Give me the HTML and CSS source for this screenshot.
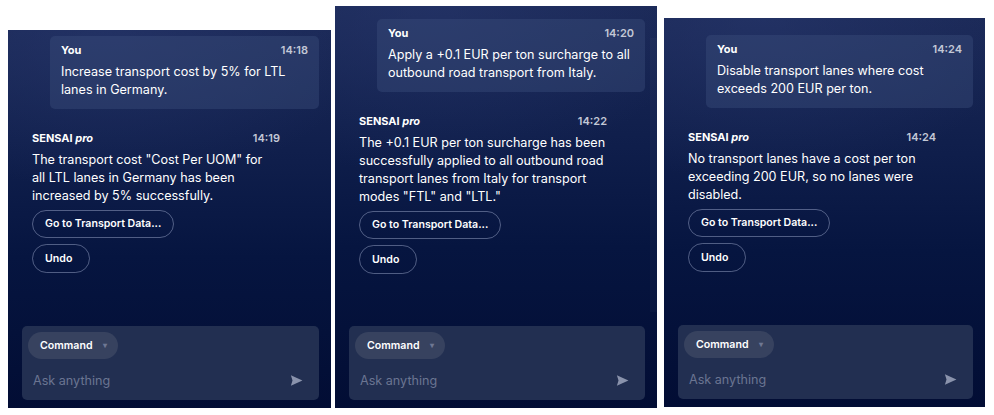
FILE: index.html
```html
<!DOCTYPE html>
<html lang="en">
<head>
<meta charset="utf-8">
<title>SENSAI pro chat</title>
<link rel="stylesheet" href="styles.css">
</head>
<body>
<div class="board">
  <section class="panel panel-a">
    <div class="thread">
      <div class="bubble">
        <div class="meta"><span class="who">You</span><span class="time">14:18</span></div>
        <p class="text">Increase transport cost by 5% for LTL lanes in Germany.</p>
      </div>
      <div class="reply">
        <div class="meta"><span class="who">SENSAI <em>pro</em></span><span class="time">14:19</span></div>
        <p class="text">The transport cost "Cost Per UOM" for all LTL lanes in Germany has been increased by 5% successfully.</p>
        <div class="actions">
          <button class="pill">Go to Transport Data...</button>
          <button class="pill pill-short">Undo</button>
        </div>
      </div>
    </div>
    <div class="composer">
      <div class="chip">Command <span class="caret">&#9662;</span></div>
      <div class="prompt">
        <span class="placeholder">Ask anything</span>
        <svg class="send" viewBox="0 0 24 24" width="15" height="15"><path d="M3 20.5 21.5 12 3 3.5l2.6 8.5z" fill="currentColor"/></svg>
      </div>
    </div>
  </section>

  <section class="panel panel-b">
    <div class="scrolltrack"></div>
    <div class="thread">
      <div class="bubble">
        <div class="meta"><span class="who">You</span><span class="time">14:20</span></div>
        <p class="text">Apply a +0.1 EUR per ton surcharge to all outbound road transport from Italy.</p>
      </div>
      <div class="reply">
        <div class="meta"><span class="who">SENSAI <em>pro</em></span><span class="time">14:22</span></div>
        <p class="text">The +0.1 EUR per ton surcharge has been successfully applied to all outbound road transport lanes from Italy for transport modes "FTL" and "LTL."</p>
        <div class="actions">
          <button class="pill">Go to Transport Data...</button>
          <button class="pill pill-short">Undo</button>
        </div>
      </div>
    </div>
    <div class="composer">
      <div class="chip">Command <span class="caret">&#9662;</span></div>
      <div class="prompt">
        <span class="placeholder">Ask anything</span>
        <svg class="send" viewBox="0 0 24 24" width="15" height="15"><path d="M3 20.5 21.5 12 3 3.5l2.6 8.5z" fill="currentColor"/></svg>
      </div>
    </div>
  </section>

  <section class="panel panel-c">
    <div class="thread">
      <div class="bubble">
        <div class="meta"><span class="who">You</span><span class="time">14:24</span></div>
        <p class="text">Disable transport lanes where cost exceeds 200 EUR per ton.</p>
      </div>
      <div class="reply">
        <div class="meta"><span class="who">SENSAI <em>pro</em></span><span class="time">14:24</span></div>
        <p class="text">No transport lanes have a cost per ton exceeding 200 EUR, so no lanes were disabled.</p>
        <div class="actions">
          <button class="pill">Go to Transport Data...</button>
          <button class="pill pill-short">Undo</button>
        </div>
      </div>
    </div>
    <div class="composer">
      <div class="chip">Command <span class="caret">&#9662;</span></div>
      <div class="prompt">
        <span class="placeholder">Ask anything</span>
        <svg class="send" viewBox="0 0 24 24" width="15" height="15"><path d="M3 20.5 21.5 12 3 3.5l2.6 8.5z" fill="currentColor"/></svg>
      </div>
    </div>
  </section>
</div>
</body>
</html>
```

FILE: styles.css
```css
* { box-sizing: border-box; }

html, body {
  margin: 0;
  padding: 0;
  background: #ffffff;
}

body {
  font-family: Inter, "Noto Sans", "Liberation Sans", sans-serif;
  color: #ffffff;
  -webkit-font-smoothing: antialiased;
}

.board {
  display: flex;
  align-items: flex-start;
  padding-left: 8px;
}

.panel {
  position: relative;
  display: flex;
  flex-direction: column;
  background:
    radial-gradient(ellipse 120% 60% at 30% 0%, rgba(40, 56, 110, 0.55), rgba(40, 56, 110, 0) 70%),
    linear-gradient(180deg, #1b2957 0%, #0f1e4b 35%, #061540 60%, #020d34 100%);
  overflow: hidden;
}

.panel-a { width: 323px; height: 378px; margin-top: 30px; }
.panel-b { width: 322px; height: 402px; margin-top: 6px; margin-left: 4px; }
.panel-c { width: 321px; height: 389px; margin-top: 18px; margin-left: 7px; }

.panel-a .thread { padding-top: 6px; }
.panel-b .thread { padding-top: 13px; }
.panel-c .thread { padding-top: 17px; }

.panel-a .reply .text { max-width: 240px; }

.scrolltrack {
  position: absolute;
  right: 0;
  top: 32px;
  width: 7px;
  height: 274px;
  background: rgba(255, 255, 255, 0.025);
}

.thread {
  flex: 1;
  display: flex;
  flex-direction: column;
}

.meta {
  display: flex;
  justify-content: space-between;
  align-items: center;
  height: 14px;
  font-size: 11px;
  line-height: 14px;
  font-weight: 700;
}

.who em {
  font-style: italic;
  font-weight: 700;
}

.time {
  color: #c3c8d6;
  font-weight: 600;
}

.text {
  margin: 6px 0 0;
  font-size: 12.6px;
  line-height: 18px;
  font-weight: 400;
  color: #ffffff;
}

.bubble {
  margin: 0 12px 0 42px;
  padding: 7px 11px 10px 11px;
  background: rgba(60, 78, 125, 0.42);
  border-radius: 5px;
}

.reply {
  width: 248px;
  margin: 22px 0 0 24px;
}

.actions {
  display: flex;
  flex-direction: column;
  align-items: flex-start;
  gap: 6px;
  margin-top: 5px;
}

.pill {
  height: 28px;
  padding: 0 12px;
  border: 1px solid rgba(170, 182, 215, 0.45);
  border-radius: 14px;
  background: transparent;
  color: #ffffff;
  font-family: inherit;
  font-size: 10.6px;
  font-weight: 600;
  line-height: 26px;
  text-align: left;
}

.pill-short {
  min-width: 58px;
  height: 29px;
  border-radius: 15px;
}

.composer {
  margin: 0 12px 8px 14px;
  height: 74px;
  padding: 6px 15px 0 6px;
  background: #222f51;
  border-radius: 5px;
  display: flex;
  flex-direction: column;
}

.chip {
  align-self: flex-start;
  height: 27px;
  padding: 0 11px 0 12px;
  border-radius: 14px;
  background: #37425f;
  font-size: 10.6px;
  font-weight: 600;
  line-height: 27px;
  display: flex;
  align-items: center;
  gap: 10px;
}

.caret {
  color: #6f7893;
  font-size: 8px;
}

.prompt {
  display: flex;
  justify-content: space-between;
  align-items: center;
  margin-top: 9px;
  padding-left: 5px;
  height: 24px;
}

.placeholder {
  font-size: 12.6px;
  color: #6b7591;
}

.send {
  color: #8a93ac;
}
```
